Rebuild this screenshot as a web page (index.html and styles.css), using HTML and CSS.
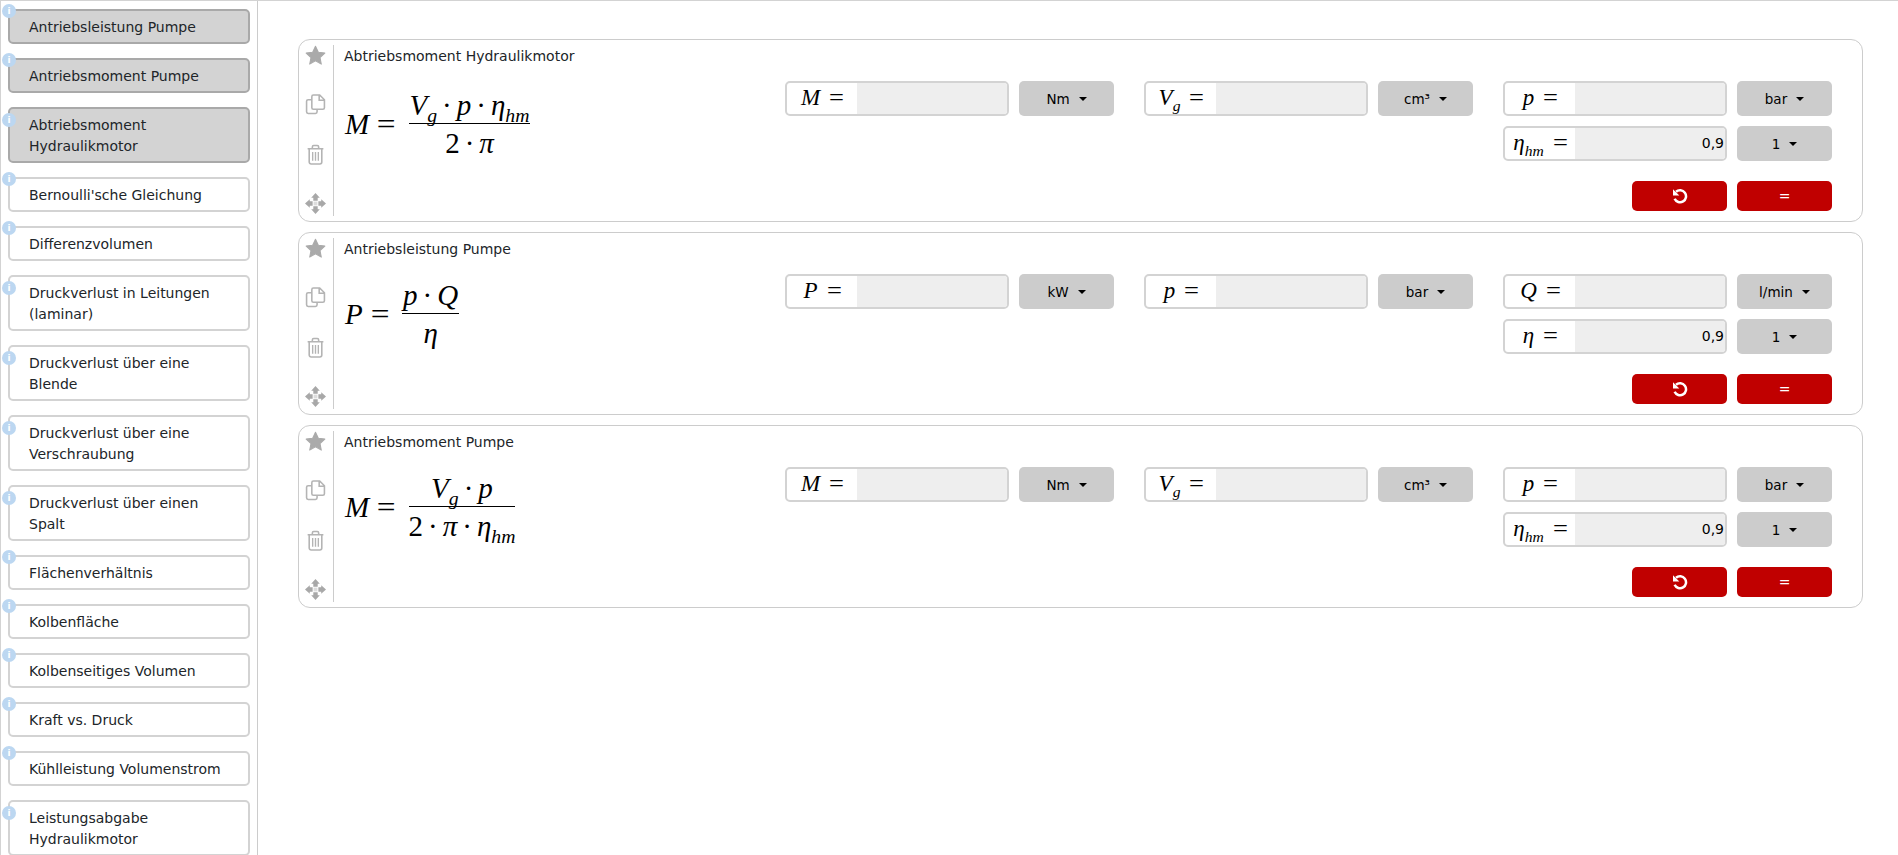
FILE: index.html
```html
<!DOCTYPE html>
<html lang="de">

<head>
    <meta charset="UTF-8">
    <meta name="viewport" content="width=device-width, initial-scale=1.0">
    <title>Formeln</title>
    <link rel="stylesheet" href="styles.css">
</head>

<body>
    <!-- icons used by every card -->
    <svg class="sprite" aria-hidden="true">
        <symbol id="i-star" viewBox="0 0 20 20">
            <path d="M10 1.200l2.700 5.700 6.200.8-4.600 4.300 1.200 6.200L10 15.100l-5.500 3.100 1.200-6.200L1.100 7.700l6.200-.8z" fill="#aaa" stroke="#aaa" stroke-width="1" stroke-linejoin="round" />
        </symbol>
        <symbol id="i-copy" viewBox="0 0 20 20">
            <path d="M6.500 5.500H3a1.500 1.500 0 0 0-1.500 1.500v10A1.500 1.500 0 0 0 3 18.500h7a1.500 1.500 0 0 0 1.500-1.500v-2.500" fill="none" stroke="#b4b4b4" stroke-width="1.500" />
            <path d="M8 1h6l4.500 4.500V13a1.500 1.500 0 0 1-1.500 1.500H8A1.500 1.500 0 0 1 6.500 13V2.500A1.500 1.500 0 0 1 8 1zM13.500 1v5h5" fill="#fff" stroke="#b4b4b4" stroke-width="1.500" />
        </symbol>
        <symbol id="i-trash" viewBox="0 0 20 20">
            <path d="M2.500 4.500h15M7 4.500V2.800A1.300 1.300 0 0 1 8.300 1.500h3.400A1.300 1.300 0 0 1 13 2.800v1.700M4 4.500v12.700A1.800 1.800 0 0 0 5.800 19h8.400a1.800 1.800 0 0 0 1.800-1.800V4.500" fill="none" stroke="#b4b4b4" stroke-width="1.500" />
            <path d="M7.300 7.500v8.500M10 7.500v8.500M12.700 7.500v8.500" fill="none" stroke="#b4b4b4" stroke-width="1.300" />
        </symbol>
        <symbol id="i-move" viewBox="0 0 22 22">
            <path d="M11 0l4.500 5h-2.200v3H8.700V5H6.500zM11 22l-4.500-5h2.200v-3h4.600v3h2.200zM0 11l5-4.500v2.200h3v4.600H5v2.200zM22 11l-5 4.500v-2.200h-3V8.700h3V6.500z" fill="#a8a8a8" />
            <path d="M9 9h4v4H9z" fill="#ddd" />
        </symbol>
        <symbol id="i-undo" viewBox="0 0 16 16">
            <path d="M4 3.800A6 6 0 1 1 2.600 10.800" fill="none" stroke="#fff" stroke-width="2.500" />
            <path d="M1 1.200v6.300h6.300z" fill="#fff" />
        </symbol>
    </svg>

    <div class="page">
        <nav class="sidebar">
            <a class="item active" href="javascript:;"><span class="badge">i</span>Antriebsleistung Pumpe</a>
            <a class="item active" href="javascript:;"><span class="badge">i</span>Antriebsmoment Pumpe</a>
            <a class="item active" href="javascript:;"><span class="badge">i</span>Abtriebsmoment<br>Hydraulikmotor</a>
            <a class="item" href="javascript:;"><span class="badge">i</span>Bernoulli'sche Gleichung</a>
            <a class="item" href="javascript:;"><span class="badge">i</span>Differenzvolumen</a>
            <a class="item" href="javascript:;"><span class="badge">i</span>Druckverlust in Leitungen<br>(laminar)</a>
            <a class="item" href="javascript:;"><span class="badge">i</span>Druckverlust über eine<br>Blende</a>
            <a class="item" href="javascript:;"><span class="badge">i</span>Druckverlust über eine<br>Verschraubung</a>
            <a class="item" href="javascript:;"><span class="badge">i</span>Druckverlust über einen<br>Spalt</a>
            <a class="item" href="javascript:;"><span class="badge">i</span>Flächenverhältnis</a>
            <a class="item" href="javascript:;"><span class="badge">i</span>Kolbenfläche</a>
            <a class="item" href="javascript:;"><span class="badge">i</span>Kolbenseitiges Volumen</a>
            <a class="item" href="javascript:;"><span class="badge">i</span>Kraft vs. Druck</a>
            <a class="item" href="javascript:;"><span class="badge">i</span>Kühlleistung Volumenstrom</a>
            <a class="item" href="javascript:;"><span class="badge">i</span>Leistungsabgabe<br>Hydraulikmotor</a>
        </nav>

        <main class="content">
            <!-- Abtriebsmoment Hydraulikmotor -->
            <section class="card">
                <div class="rail">
                    <svg class="icon"><use href="#i-star" /></svg>
                    <svg class="icon"><use href="#i-copy" /></svg>
                    <svg class="icon"><use href="#i-trash" /></svg>
                    <svg class="icon"><use href="#i-move" /></svg>
                </div>
                <div class="card-body">
                    <div class="card-title">Abtriebsmoment Hydraulikmotor</div>
                    <div class="calc">
                        <div class="formula">
                            <span class="lhs"><i>M</i><span class="eq">=</span></span>
                            <span class="frac">
                                <span class="num"><i>V<sub>g</sub></i><span class="dot">·</span><i>p</i><span class="dot">·</span><i>η<sub>hm</sub></i></span>
                                <span class="den">2<span class="dot">·</span><i>π</i></span>
                            </span>
                        </div>
                        <div class="col">
                            <div class="field">
                                <div class="group"><label class="sym"><i>M</i><span class="eq">=</span></label><span class="value"></span></div>
                                <button class="unit">Nm</button>
                            </div>
                        </div>
                        <div class="col">
                            <div class="field">
                                <div class="group"><label class="sym"><i>V<sub>g</sub></i><span class="eq">=</span></label><span class="value"></span></div>
                                <button class="unit">cm³</button>
                            </div>
                        </div>
                        <div class="col">
                            <div class="field">
                                <div class="group"><label class="sym"><i>p</i><span class="eq">=</span></label><span class="value"></span></div>
                                <button class="unit">bar</button>
                            </div>
                            <div class="field">
                                <div class="group"><label class="sym"><i>η<sub>hm</sub></i><span class="eq">=</span></label><span class="value">0,9</span></div>
                                <button class="unit">1</button>
                            </div>
                        </div>
                    </div>
                    <div class="actions">
                        <button class="red"><svg class="undo"><use href="#i-undo" /></svg></button>
                        <button class="red">=</button>
                    </div>
                </div>
            </section>

            <!-- Antriebsleistung Pumpe -->
            <section class="card">
                <div class="rail">
                    <svg class="icon"><use href="#i-star" /></svg>
                    <svg class="icon"><use href="#i-copy" /></svg>
                    <svg class="icon"><use href="#i-trash" /></svg>
                    <svg class="icon"><use href="#i-move" /></svg>
                </div>
                <div class="card-body">
                    <div class="card-title">Antriebsleistung Pumpe</div>
                    <div class="calc">
                        <div class="formula raised">
                            <span class="lhs"><i>P</i><span class="eq">=</span></span>
                            <span class="frac">
                                <span class="num"><i>p</i><span class="dot">·</span><i>Q</i></span>
                                <span class="den"><i>η</i></span>
                            </span>
                        </div>
                        <div class="col">
                            <div class="field">
                                <div class="group"><label class="sym"><i>P</i><span class="eq">=</span></label><span class="value"></span></div>
                                <button class="unit">kW</button>
                            </div>
                        </div>
                        <div class="col">
                            <div class="field">
                                <div class="group"><label class="sym"><i>p</i><span class="eq">=</span></label><span class="value"></span></div>
                                <button class="unit">bar</button>
                            </div>
                        </div>
                        <div class="col">
                            <div class="field">
                                <div class="group"><label class="sym"><i>Q</i><span class="eq">=</span></label><span class="value"></span></div>
                                <button class="unit">l/min</button>
                            </div>
                            <div class="field">
                                <div class="group"><label class="sym"><i>η</i><span class="eq">=</span></label><span class="value">0,9</span></div>
                                <button class="unit">1</button>
                            </div>
                        </div>
                    </div>
                    <div class="actions">
                        <button class="red"><svg class="undo"><use href="#i-undo" /></svg></button>
                        <button class="red">=</button>
                    </div>
                </div>
            </section>

            <!-- Antriebsmoment Pumpe -->
            <section class="card">
                <div class="rail">
                    <svg class="icon"><use href="#i-star" /></svg>
                    <svg class="icon"><use href="#i-copy" /></svg>
                    <svg class="icon"><use href="#i-trash" /></svg>
                    <svg class="icon"><use href="#i-move" /></svg>
                </div>
                <div class="card-body">
                    <div class="card-title">Antriebsmoment Pumpe</div>
                    <div class="calc">
                        <div class="formula raised">
                            <span class="lhs"><i>M</i><span class="eq">=</span></span>
                            <span class="frac">
                                <span class="num"><i>V<sub>g</sub></i><span class="dot">·</span><i>p</i></span>
                                <span class="den">2<span class="dot">·</span><i>π</i><span class="dot">·</span><i>η<sub>hm</sub></i></span>
                            </span>
                        </div>
                        <div class="col">
                            <div class="field">
                                <div class="group"><label class="sym"><i>M</i><span class="eq">=</span></label><span class="value"></span></div>
                                <button class="unit">Nm</button>
                            </div>
                        </div>
                        <div class="col">
                            <div class="field">
                                <div class="group"><label class="sym"><i>V<sub>g</sub></i><span class="eq">=</span></label><span class="value"></span></div>
                                <button class="unit">cm³</button>
                            </div>
                        </div>
                        <div class="col">
                            <div class="field">
                                <div class="group"><label class="sym"><i>p</i><span class="eq">=</span></label><span class="value"></span></div>
                                <button class="unit">bar</button>
                            </div>
                            <div class="field">
                                <div class="group"><label class="sym"><i>η<sub>hm</sub></i><span class="eq">=</span></label><span class="value">0,9</span></div>
                                <button class="unit">1</button>
                            </div>
                        </div>
                    </div>
                    <div class="actions">
                        <button class="red"><svg class="undo"><use href="#i-undo" /></svg></button>
                        <button class="red">=</button>
                    </div>
                </div>
            </section>
        </main>
    </div>
</body>

</html>
```

FILE: styles.css
```css
* {
    padding: 0;
    margin: 0;
    box-sizing: border-box;
}

html,
body {
    height: 100%;
    overflow: hidden;
}

body {
    font-family: "DejaVu Sans", sans-serif;
    font-size: 14px;
    color: #212529;
    background-color: #fff;
}

a {
    text-decoration: none;
    color: #212529;
}

.sprite {
    position: absolute;
    width: 0;
    height: 0;
}

.page {
    display: flex;
    height: 855px;
    border-top: 1px solid #d3d3d3;
    overflow: hidden;
}

/* sidebar */
.sidebar {
    flex: none;
    display: flex;
    flex-direction: column;
    gap: 14px;
    width: 258px;
    height: 900px;
    padding: 8px 6px 0 7px;
    border-left: 1px solid #d3d3d3;
    border-right: 1px solid #ccc;
}

.item {
    position: relative;
    display: block;
    flex: none;
    width: 242px;
    padding: 6px 5px 4px 19px;
    border: 2px solid #d3d3d3;
    border-radius: 5px;
    line-height: 21px;
    background-color: #fff;
}

.item.active {
    background-color: #d3d3d3;
    border-color: #a9a9a9;
}

.badge {
    position: absolute;
    left: -8px;
    top: calc(50% - 22.5px);
    width: 14px;
    height: 14px;
    border-radius: 50%;
    background-color: #bcd7f1;
    color: #fff;
    font-size: 9px;
    font-weight: 700;
    line-height: 14px;
    text-align: center;
}

/* cards */
.content {
    flex: 1;
    padding: 38px 35px 0 40px;
}

.card {
    display: flex;
    height: 183px;
    margin-bottom: 10px;
    padding: 5px 0;
    border: 1px solid #ccc;
    border-radius: 12px;
}

.rail {
    flex: none;
    display: flex;
    flex-direction: column;
    justify-content: space-between;
    align-items: center;
    width: 35px;
    padding-right: 1px;
    padding-bottom: 2px;
    border-right: 1px solid #ccc;
}

.icon {
    display: block;
    width: 21px;
    height: 21px;
}

.card-body {
    flex: 1;
    padding-left: 10px;
}

.card-title {
    height: 21px;
    padding-top: 1px;
    line-height: 21px;
}

.calc {
    display: flex;
    height: 80px;
    margin-top: 15px;
}

.formula {
    display: flex;
    align-items: center;
    width: 441px;
    height: 84px;
    padding-top: 2px;
    padding-left: 1px;
    font-family: "Liberation Serif", serif;
    font-size: 29px;
    color: #000;
}

.formula.raised {
    height: 78px;
}

.eq {
    display: inline-block;
    font-style: normal;
    margin-left: 9px;
    transform: scaleX(1.15);
}

.lhs {
    margin-right: 14px;
}

.frac {
    display: inline-flex;
    flex-direction: column;
    text-align: center;
}

.num {
    padding: 0 1px 2px;
    border-bottom: 1px solid #000;
    line-height: 32px;
    white-space: nowrap;
}

.den {
    padding-top: 2px;
    line-height: 34px;
    white-space: nowrap;
}

.dot {
    margin: 0 5px;
}

sub {
    font-size: 68%;
    line-height: 0;
}

.col {
    display: flex;
    flex-direction: column;
    gap: 10px;
    width: 329px;
    margin-right: 30px;
}

.col:last-child {
    margin-right: 0;
}

.field {
    display: flex;
    gap: 10px;
    height: 35px;
}

.group {
    flex: 1;
    display: flex;
    border: 2px solid #d3d3d3;
    border-radius: 5px;
    overflow: hidden;
}

.sym {
    flex: none;
    width: 70px;
    font-family: "Liberation Serif", serif;
    font-size: 23px;
    line-height: 30px;
    text-align: center;
    color: #000;
    white-space: nowrap;
}

.sym .eq {
    margin-left: 10px;
}

.value {
    flex: 1;
    padding-right: 1px;
    background-color: #eee;
    line-height: 31px;
    text-align: right;
    color: #000;
}

.unit {
    flex: none;
    width: 95px;
    border: 0;
    border-radius: 5px;
    background-color: #ccc;
    color: #000;
    font-family: inherit;
    font-size: 13.5px;
}

/* the little triangle of the dropdown */
.unit::after {
    content: "";
    display: inline-block;
    margin-left: 9px;
    vertical-align: 3px;
    border-top: 4px solid #000;
    border-left: 4px solid transparent;
    border-right: 4px solid transparent;
}

.actions {
    display: flex;
    justify-content: flex-end;
    gap: 10px;
    margin-top: 20px;
    padding-right: 30px;
}

.red {
    width: 95px;
    height: 30px;
    border: 0;
    border-radius: 5px;
    background-color: #c00000;
    color: #fff;
    font-family: inherit;
    font-size: 14px;
}

.undo {
    display: block;
    width: 16px;
    height: 16px;
    margin: 0 auto;
}
```
